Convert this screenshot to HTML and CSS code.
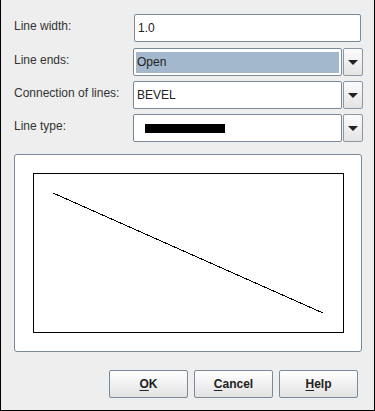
FILE: index.html
```html
<!DOCTYPE html>
<html>
<head>
<meta charset="utf-8">
<link rel="stylesheet" href="styles.css">
</head>
<body>
<div class="window">
  <div class="form">
    <label class="lbl">Line width:</label>
    <div class="textfield first">1.0</div>

    <label class="lbl">Line ends:</label>
    <div class="combo">
      <div class="combo-field"><span class="sel">Open</span></div>
      <div class="arrow-btn"><span class="tri"></span></div>
    </div>

    <label class="lbl">Connection of lines:</label>
    <div class="combo">
      <div class="combo-field"><span class="val">BEVEL</span></div>
      <div class="arrow-btn"><span class="tri"></span></div>
    </div>

    <label class="lbl">Line type:</label>
    <div class="combo">
      <div class="combo-field"><span class="linebar"></span></div>
      <div class="arrow-btn"><span class="tri"></span></div>
    </div>
  </div>

  <div class="preview">
    <svg class="canvas" width="311" height="160" viewBox="0 0 311 160" shape-rendering="crispEdges">
      <rect x="0.5" y="0.5" width="310" height="159" fill="#fff" stroke="#000" stroke-width="1"/>
      <line x1="20" y1="20" x2="290" y2="140" stroke="#000" stroke-width="1"/>
    </svg>
  </div>

  <div class="buttons">
    <button class="btn"><u>O</u>K</button>
    <button class="btn"><u>C</u>ancel</button>
    <button class="btn"><u>H</u>elp</button>
  </div>
</div>
</body>
</html>
```

FILE: styles.css
```css
html, body {
  margin: 0;
  padding: 0;
  background: #eeeeee;
}

.window {
  box-sizing: border-box;
  width: 375px;
  height: 411px;
  background: #eeeeee;
  border-left: 1px solid #000;
  border-right: 1px solid #000;
  border-bottom: 1px solid #000;
  padding: 14px 11px 0 13px;
  display: flex;
  flex-direction: column;
  font-family: "Liberation Sans", Arial, sans-serif;
  font-size: 12px;
  color: #333;
}

.form {
  display: grid;
  grid-template-columns: 119px 1fr;
  row-gap: 5px;
}

.lbl {
  line-height: 14px;
  padding-top: 5px;
  color: #333;
  white-space: nowrap;
}

.textfield {
  box-sizing: border-box;
  height: 28px;
  margin: 0 2px 1px 1px;
  border: 1px solid #7a8a99;
  border-radius: 2px;
  background: #fff;
  padding: 0 3px;
  line-height: 26px;
  color: #222;
}

.combo {
  display: flex;
  gap: 1px;
  height: 28px;
}

.combo-field {
  box-sizing: border-box;
  flex: 1;
  border: 1px solid #7a8a99;
  border-radius: 2px;
  background: #fff;
  padding: 3px 2px 2px 2px;
  display: flex;
  align-items: center;
}

.sel {
  display: block;
  width: 100%;
  height: 21px;
  line-height: 21px;
  background: #a3b8cc;
  padding-left: 1px;
  color: #222;
}

.val {
  padding-left: 1px;
  color: #222;
  line-height: 21px;
}

.linebar {
  display: block;
  width: 80px;
  height: 9px;
  margin-left: 9px;
  background: #000;
}

.arrow-btn {
  box-sizing: border-box;
  width: 20px;
  border: 1px solid #8a98a6;
  border-radius: 2px;
  background: linear-gradient(#fbfbfb, #e4e4e4);
  display: flex;
  align-items: center;
  justify-content: center;
}

.tri {
  width: 0;
  height: 0;
  border-left: 5px solid transparent;
  border-right: 5px solid transparent;
  border-top: 5px solid #222;
}

.preview {
  box-sizing: border-box;
  margin-top: 12px;
  width: 348px;
  height: 198px;
  border: 1px solid #7a8a99;
  border-radius: 3px;
  background: #fff;
  padding: 18px;
}

.canvas {
  display: block;
}

.buttons {
  display: flex;
  justify-content: flex-end;
  gap: 6px;
  margin-top: 18px;
  margin-right: 5px;
}

.btn {
  box-sizing: border-box;
  width: 79px;
  height: 28px;
  border: 1px solid #7a8a99;
  border-radius: 2px;
  background: linear-gradient(#ffffff, #e2e2e2);
  font-family: "Liberation Sans", Arial, sans-serif;
  font-size: 12px;
  font-weight: bold;
  color: #222;
  padding: 0;
}

.btn u {
  text-decoration-thickness: 1px;
  text-underline-offset: 2px;
}
```
